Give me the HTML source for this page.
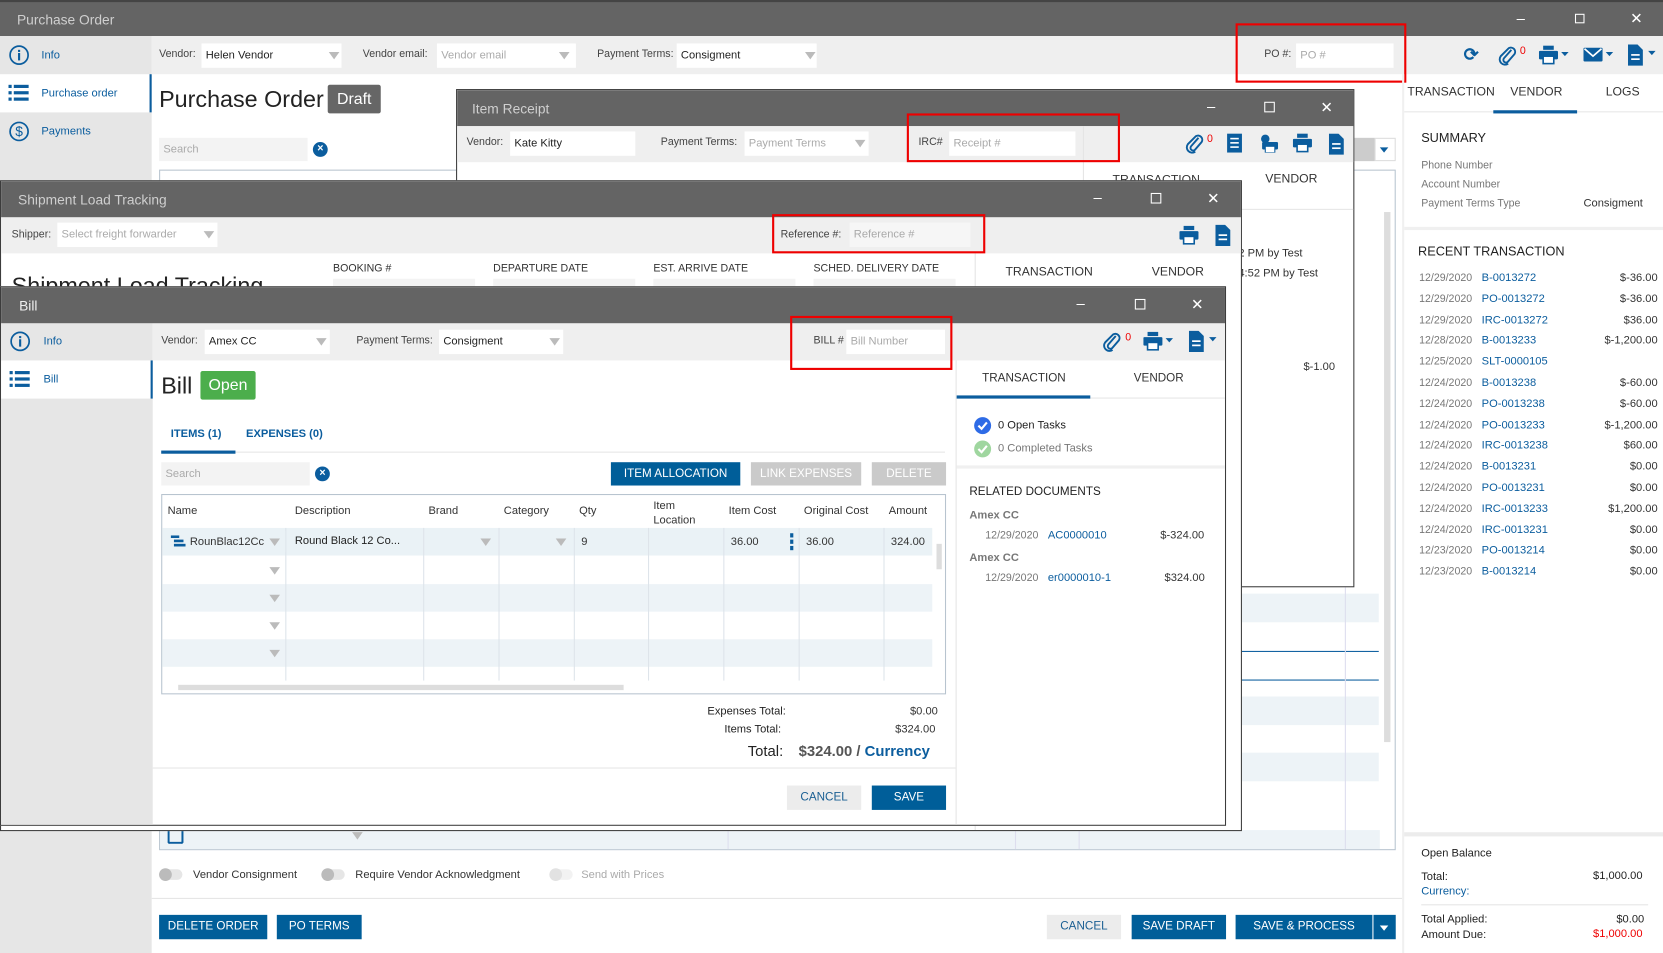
<!DOCTYPE html>
<html><head><meta charset="utf-8">
<style>
*{box-sizing:border-box;margin:0;padding:0}
html,body{width:1663px;height:953px;overflow:hidden;background:#fff}
#w{position:absolute;left:0;top:0;width:1568px;height:899px;transform:scale(1.06059,1.0601);transform-origin:0 0;font-family:"Liberation Sans",sans-serif;font-size:10.5px;color:#333;overflow:hidden}
.a{position:absolute}
.t{position:absolute;white-space:nowrap;line-height:1}
.tb{background:#646464}
.tt{color:#cfcfcf;font-size:13px}
.bar{background:#efefef}
.in{position:absolute;background:#fff;height:23px;padding:5px 4px;white-space:nowrap;font-size:10.5px;color:#222}
.ph{color:#aaa}
.ar{position:absolute;width:0;height:0;border-left:5px solid transparent;border-right:5px solid transparent;border-top:7px solid #bbb}
.red{position:absolute;border:2px solid #e00}
.btn{position:absolute;background:#005e99;color:#fff;font-size:11px;text-align:center;line-height:23px;height:23px}
.gbtn{position:absolute;background:#ececec;color:#1a5f93;font-size:11px;text-align:center;line-height:23px;height:23px}
.lk{color:#0b5d9e}
.g{color:#777}
.ctl{position:absolute;color:#fff;font-size:14px;line-height:1}
.side{background:#e6e6e6}
.xc{position:absolute;width:14px;height:14px;border-radius:50%;background:#0b5d9e;color:#fff;font-size:10px;text-align:center;line-height:14px;font-weight:bold}
.win{position:absolute;border:1px solid #3c3c3c;background:#fff;overflow:hidden}
.lbl{font-size:10px;color:#444}
</style></head><body><div id="w">

<!-- PO window -->
<div class="a tb" style="left:0;top:0;width:1568px;height:34px;border-top:2px solid #444"></div>
<div class="t tt" style="left:16px;top:12px">Purchase Order</div>
<div class="ctl" style="left:1430px;top:10px">–</div>
<div class="a" style="left:1485px;top:13px;width:9px;height:9px;border:1px solid #fff"></div>
<div class="ctl" style="left:1537px;top:10px">✕</div>
<div class="a bar" style="left:143px;top:34px;width:1425px;height:36px"></div>
<div class="a side" style="left:0;top:34px;width:143px;height:865px"></div>
<div class="a" style="left:0;top:70px;width:143px;height:36px;background:#fff;border-right:2px solid #0b5d9e"></div>
<svg class="a" style="left:8px;top:42px" width="20" height="20"><circle cx="10" cy="10" r="8.5" fill="none" stroke="#0b5d9e" stroke-width="1.6"/><rect x="9" y="8" width="2" height="7" fill="#0b5d9e"/><rect x="9" y="5" width="2" height="2" fill="#0b5d9e"/></svg>
<div class="t lk" style="left:39px;top:47px">Info</div>
<svg class="a" style="left:8px;top:79px" width="20" height="18" fill="#0b5d9e"><rect x="0" y="1" width="3" height="3"/><rect x="5" y="1" width="14" height="3"/><rect x="0" y="7" width="3" height="3"/><rect x="5" y="7" width="14" height="3"/><rect x="0" y="13" width="3" height="3"/><rect x="5" y="13" width="14" height="3"/></svg>
<div class="t lk" style="left:39px;top:83px">Purchase order</div>
<svg class="a" style="left:8px;top:114px" width="20" height="20"><circle cx="10" cy="10" r="8.5" fill="none" stroke="#0b5d9e" stroke-width="1.6"/><text x="10" y="14.5" text-anchor="middle" font-size="13" fill="#0b5d9e" font-family="Liberation Sans">$</text></svg>
<div class="t lk" style="left:39px;top:119px">Payments</div>

<div class="t lbl" style="left:150px;top:47px">Vendor:</div>
<div class="in" style="left:190px;top:41px;width:132px">Helen Vendor</div><div class="ar" style="left:310px;top:49px"></div>
<div class="t lbl" style="left:342px;top:47px">Vendor email:</div>
<div class="in ph" style="left:412px;top:41px;width:131px">Vendor email</div><div class="ar" style="left:527px;top:49px"></div>
<div class="t lbl" style="left:563px;top:47px">Payment Terms:</div>
<div class="in" style="left:638px;top:41px;width:132px">Consigment</div><div class="ar" style="left:759px;top:49px"></div>
<div class="t lbl" style="left:1192px;top:47px">PO #:</div>
<div class="in ph" style="left:1222px;top:41px;width:92px">PO #</div>
<div class="red" style="left:1165px;top:22px;width:161px;height:56px"></div>
<div class="t lk" style="left:1380px;top:43px;font-size:17px;font-weight:bold">⟳</div>
<svg class="a" style="left:1412px;top:42px" width="18" height="20"><path d="M13 5 L6 13 a2.5 2.5 0 0 0 3.5 3.5 L16 9 a4 4 0 0 0 -5.5 -5.5 L3 11 a5 5 0 0 0 7 7" fill="none" stroke="#0b5d9e" stroke-width="1.8"/></svg>
<div class="t" style="left:1433px;top:44px;color:#e00;font-size:10px">0</div>
<svg class="a" style="left:1451px;top:43px" width="30" height="18" fill="#0b5d9e"><rect x="4" y="0" width="10" height="4"/><rect x="0" y="5" width="18" height="8" rx="1"/><rect x="4" y="10" width="10" height="7" fill="#fff" stroke="#0b5d9e" stroke-width="1.5"/><path d="M21 6h7l-3.5 4z"/></svg>
<svg class="a" style="left:1493px;top:44px" width="30" height="16" fill="#0b5d9e"><rect x="0" y="1" width="18" height="13" rx="1"/><path d="M1 2 L9 9 L17 2" stroke="#fff" stroke-width="1.6" fill="none"/><path d="M21 5h7l-3.5 4z"/></svg>
<svg class="a" style="left:1535px;top:42px" width="30" height="20" fill="#0b5d9e"><path d="M0 0h9l5 5v15h-14z"/><rect x="3" y="9" width="8" height="1.6" fill="#fff"/><rect x="3" y="13" width="8" height="1.6" fill="#fff"/><path d="M19 6h7l-3.5 4z"/></svg>

<div class="t" style="left:150px;top:83px;font-size:22px;color:#222">Purchase Order</div>
<div class="a" style="left:309px;top:80px;width:50px;height:27px;background:#666;border-radius:2px;color:#fff;font-size:15px;text-align:center;line-height:27px">Draft</div>
<div class="in ph" style="left:150px;top:130px;width:140px;height:22px;background:#f3f3f3">Search</div>
<div class="xc" style="left:295px;top:134px">×</div>

<!-- PO grid background -->
<div class="a" style="left:150px;top:160px;width:1166px;height:642px;border:1px solid #b8c4cf"></div>
<div class="a" style="left:1276px;top:130px;width:20px;height:22px;background:#ccc"></div>
<div class="a" style="left:1296px;top:130px;width:20px;height:22px;background:#fff;border:1px solid #ddd"></div>
<div class="ar" style="left:1301px;top:139px;border-top-color:#0b5d9e;border-width:5px 4px 0 4px"></div>
<div class="a" style="left:1170px;top:560px;width:130px;height:27px;background:#edf3f7"></div>
<div class="a" style="left:1170px;top:657px;width:130px;height:27px;background:#edf3f7"></div>
<div class="a" style="left:1170px;top:710px;width:130px;height:27px;background:#edf3f7"></div>
<div class="a" style="left:151px;top:783px;width:1150px;height:18px;background:#edf3f7"></div>
<div class="a" style="left:1170px;top:614px;width:130px;height:1px;background:#0b5d9e"></div>
<div class="a" style="left:1170px;top:641px;width:130px;height:1px;background:#0b5d9e"></div>
<div class="a" style="left:1268px;top:553px;width:1px;height:248px;background:#dde"></div>
<div class="a" style="left:1305px;top:200px;width:6px;height:500px;background:#ddd"></div>
<div class="a" style="left:158px;top:782px;width:15px;height:14px;border:2px solid #0b5d9e;border-top:none;border-radius:0 0 2px 2px"></div>
<div class="ar" style="left:332px;top:785px"></div>
<div class="a" style="left:686px;top:783px;width:1px;height:18px;background:#dde"></div>
<div class="a" style="left:957px;top:783px;width:1px;height:18px;background:#dde"></div>
<div class="a" style="left:1017px;top:783px;width:1px;height:18px;background:#dde"></div>

<!-- PO footer -->
<div class="a" style="left:150px;top:820px;width:22px;height:10px;border-radius:5px;background:#e6e6e6"></div><div class="a" style="left:150px;top:819px;width:12px;height:12px;border-radius:50%;background:#bbb"></div>
<div class="t" style="left:182px;top:820px;color:#333">Vendor Consignment</div>
<div class="a" style="left:303px;top:820px;width:22px;height:10px;border-radius:5px;background:#e6e6e6"></div><div class="a" style="left:303px;top:819px;width:12px;height:12px;border-radius:50%;background:#bbb"></div>
<div class="t" style="left:335px;top:820px">Require Vendor Acknowledgment</div>
<div class="a" style="left:518px;top:820px;width:22px;height:10px;border-radius:5px;background:#f2f2f2"></div><div class="a" style="left:518px;top:819px;width:12px;height:12px;border-radius:50%;background:#e2e2e2"></div>
<div class="t" style="left:548px;top:820px;color:#aaa">Send with Prices</div>
<div class="a" style="left:143px;top:847px;width:1179px;height:1px;background:#e6e6e6"></div>
<div class="btn" style="left:150px;top:863px;width:102px">DELETE ORDER</div>
<div class="btn" style="left:261px;top:863px;width:80px">PO TERMS</div>
<div class="gbtn" style="left:987px;top:863px;width:70px">CANCEL</div>
<div class="btn" style="left:1067px;top:863px;width:89px">SAVE DRAFT</div>
<div class="btn" style="left:1165px;top:863px;width:129px">SAVE &amp; PROCESS</div>
<div class="btn" style="left:1295px;top:863px;width:21px"></div><div class="ar" style="left:1301px;top:873px;border-top-color:#fff;border-width:5px 4px 0 4px"></div>

<!-- PO right panel -->
<div class="a" style="left:1322px;top:70px;width:2px;height:829px;background:#f0f0f0"></div>
<div class="t" style="left:1327px;top:82px;font-size:11.5px;color:#333">TRANSACTION</div>
<div class="t" style="left:1424px;top:82px;font-size:11.5px;color:#333">VENDOR</div>
<div class="t" style="left:1514px;top:82px;font-size:11.5px;color:#333">LOGS</div>
<div class="a" style="left:1324px;top:105px;width:244px;height:1px;background:#e6e6e6"></div>
<div class="a" style="left:1408px;top:104px;width:79px;height:3px;background:#0b5d9e"></div>
<div class="t" style="left:1340px;top:124px;font-size:12px;color:#222">SUMMARY</div>
<div class="t g" style="left:1340px;top:152px;font-size:10px">Phone Number</div>
<div class="t g" style="left:1340px;top:170px;font-size:10px">Account Number</div>
<div class="t g" style="left:1340px;top:188px;font-size:10px">Payment Terms Type</div>
<div class="t" style="left:1493px;top:187px">Consigment</div>
<div class="a" style="left:1324px;top:214px;width:244px;height:3px;background:#f0f0f0"></div>
<div class="t" style="left:1337px;top:231px;font-size:12px;color:#222">RECENT TRANSACTION</div>
<div class="a" style="left:1338px;top:253px;width:225px;font-size:10.5px;line-height:19.8px">
<div style="position:relative;height:19.8px"><span class="g" style="font-size:10px">12/29/2020</span> <span class="lk" style="position:absolute;left:59px">B-0013272</span><span style="position:absolute;right:0">$-36.00</span></div>
<div style="position:relative;height:19.8px"><span class="g" style="font-size:10px">12/29/2020</span> <span class="lk" style="position:absolute;left:59px">PO-0013272</span><span style="position:absolute;right:0">$-36.00</span></div>
<div style="position:relative;height:19.8px"><span class="g" style="font-size:10px">12/29/2020</span> <span class="lk" style="position:absolute;left:59px">IRC-0013272</span><span style="position:absolute;right:0">$36.00</span></div>
<div style="position:relative;height:19.8px"><span class="g" style="font-size:10px">12/28/2020</span> <span class="lk" style="position:absolute;left:59px">B-0013233</span><span style="position:absolute;right:0">$-1,200.00</span></div>
<div style="position:relative;height:19.8px"><span class="g" style="font-size:10px">12/25/2020</span> <span class="lk" style="position:absolute;left:59px">SLT-0000105</span></div>
<div style="position:relative;height:19.8px"><span class="g" style="font-size:10px">12/24/2020</span> <span class="lk" style="position:absolute;left:59px">B-0013238</span><span style="position:absolute;right:0">$-60.00</span></div>
<div style="position:relative;height:19.8px"><span class="g" style="font-size:10px">12/24/2020</span> <span class="lk" style="position:absolute;left:59px">PO-0013238</span><span style="position:absolute;right:0">$-60.00</span></div>
<div style="position:relative;height:19.8px"><span class="g" style="font-size:10px">12/24/2020</span> <span class="lk" style="position:absolute;left:59px">PO-0013233</span><span style="position:absolute;right:0">$-1,200.00</span></div>
<div style="position:relative;height:19.8px"><span class="g" style="font-size:10px">12/24/2020</span> <span class="lk" style="position:absolute;left:59px">IRC-0013238</span><span style="position:absolute;right:0">$60.00</span></div>
<div style="position:relative;height:19.8px"><span class="g" style="font-size:10px">12/24/2020</span> <span class="lk" style="position:absolute;left:59px">B-0013231</span><span style="position:absolute;right:0">$0.00</span></div>
<div style="position:relative;height:19.8px"><span class="g" style="font-size:10px">12/24/2020</span> <span class="lk" style="position:absolute;left:59px">PO-0013231</span><span style="position:absolute;right:0">$0.00</span></div>
<div style="position:relative;height:19.8px"><span class="g" style="font-size:10px">12/24/2020</span> <span class="lk" style="position:absolute;left:59px">IRC-0013233</span><span style="position:absolute;right:0">$1,200.00</span></div>
<div style="position:relative;height:19.8px"><span class="g" style="font-size:10px">12/24/2020</span> <span class="lk" style="position:absolute;left:59px">IRC-0013231</span><span style="position:absolute;right:0">$0.00</span></div>
<div style="position:relative;height:19.8px"><span class="g" style="font-size:10px">12/23/2020</span> <span class="lk" style="position:absolute;left:59px">PO-0013214</span><span style="position:absolute;right:0">$0.00</span></div>
<div style="position:relative;height:19.8px"><span class="g" style="font-size:10px">12/23/2020</span> <span class="lk" style="position:absolute;left:59px">B-0013214</span><span style="position:absolute;right:0">$0.00</span></div>
</div>
<div class="a" style="left:1324px;top:785px;width:244px;height:4px;background:#ececec"></div>
<div class="t" style="left:1340px;top:800px;color:#222">Open Balance</div>
<div class="t" style="left:1340px;top:822px;color:#222">Total:</div>
<div class="t" style="left:1502px;top:821px;color:#222">$1,000.00</div>
<div class="t lk" style="left:1340px;top:836px">Currency:</div>
<div class="a" style="left:1340px;top:853px;width:214px;height:1px;background:#e6e6e6"></div>
<div class="t" style="left:1340px;top:862px;color:#222">Total Applied:</div>
<div class="t" style="left:1524px;top:862px;color:#222">$0.00</div>
<div class="t" style="left:1340px;top:877px;color:#222">Amount Due:</div>
<div class="t" style="left:1502px;top:876px;color:#e00">$1,000.00</div>

<!-- Item Receipt window -->
<div class="win" style="left:430px;top:84px;width:847px;height:470px">
 <div class="a tb" style="left:0;top:0;width:847px;height:34px"></div>
 <div class="t tt" style="left:14px;top:11px">Item Receipt</div>
 <div class="ctl" style="left:707px;top:8px">–</div>
 <div class="a" style="left:761px;top:11px;width:10px;height:10px;border:1px solid #fff"></div>
 <div class="ctl" style="left:814px;top:9px">✕</div>
 <div class="a bar" style="left:0;top:34px;width:847px;height:34px"></div>
 <div class="a" style="left:590px;top:34px;width:1px;height:420px;background:#e4e4e4"></div>
 <div class="t lbl" style="left:9px;top:45px">Vendor:</div>
 <div class="in" style="left:50px;top:39px;width:118px">Kate Kitty</div>
 <div class="t lbl" style="left:192px;top:45px">Payment Terms:</div>
 <div class="in ph" style="left:271px;top:39px;width:117px">Payment Terms</div><div class="ar" style="left:375px;top:47px"></div>
 <div class="t lbl" style="left:435px;top:45px">IRC#</div>
 <div class="in ph" style="left:464px;top:39px;width:119px">Receipt #</div>
 <svg class="a" style="left:686px;top:40px" width="18" height="20"><path d="M13 5 L6 13 a2.5 2.5 0 0 0 3.5 3.5 L16 9 a4 4 0 0 0 -5.5 -5.5 L3 11 a5 5 0 0 0 7 7" fill="none" stroke="#0b5d9e" stroke-width="1.8"/></svg>
 <div class="t" style="left:707px;top:42px;color:#e00;font-size:10px">0</div>
 <svg class="a" style="left:725px;top:41px" width="16" height="18" fill="#0b5d9e"><rect x="1" y="0" width="14" height="18"/><rect x="4" y="4" width="8" height="1.5" fill="#fff"/><rect x="4" y="8" width="8" height="1.5" fill="#fff"/><rect x="4" y="12" width="8" height="1.5" fill="#fff"/></svg>
 <svg class="a" style="left:756px;top:41px" width="20" height="18" fill="#0b5d9e"><circle cx="6" cy="5" r="4"/><rect x="3" y="8" width="15" height="7" rx="1"/><rect x="6" y="12" width="9" height="6" fill="#fff" stroke="#0b5d9e"/></svg>
 <svg class="a" style="left:788px;top:41px" width="20" height="18" fill="#0b5d9e"><rect x="4" y="0" width="10" height="4"/><rect x="0" y="5" width="18" height="8" rx="1"/><rect x="4" y="10" width="10" height="7" fill="#fff" stroke="#0b5d9e" stroke-width="1.5"/></svg>
 <svg class="a" style="left:822px;top:41px" width="16" height="20" fill="#0b5d9e"><path d="M0 0h9l5 5v15h-14z"/><rect x="3" y="9" width="8" height="1.6" fill="#fff"/><rect x="3" y="13" width="8" height="1.6" fill="#fff"/></svg>
 <div class="t" style="left:618px;top:80px;font-size:11.5px">TRANSACTION</div>
 <div class="t" style="left:762px;top:79px;font-size:11.5px">VENDOR</div>
 <div class="a" style="left:590px;top:112px;width:257px;height:1px;background:#e6e6e6"></div>
 <div class="a" style="left:739px;top:205px;width:108px;height:265px;border-left:1px solid #444"></div>
 <div class="t" style="left:722px;top:149px">3:52 PM by Test</div>
 <div class="t" style="left:722px;top:168px">3 04:52 PM by Test</div>
 <div class="t" style="left:798px;top:256px">$-1.00</div>
</div>

<!-- Shipment window -->
<div class="win" style="left:0;top:170px;width:1171px;height:614px">
 <div class="a tb" style="left:0;top:0;width:1171px;height:34px"></div>
 <div class="t tt" style="left:16px;top:11px">Shipment Load Tracking</div>
 <div class="ctl" style="left:1030px;top:8px">–</div>
 <div class="a" style="left:1084px;top:11px;width:10px;height:10px;border:1px solid #fff"></div>
 <div class="ctl" style="left:1137px;top:9px">✕</div>
 <div class="a bar" style="left:0;top:34px;width:1171px;height:34px"></div>
 <div class="t lbl" style="left:10px;top:46px">Shipper:</div>
 <div class="in ph" style="left:53px;top:39px;width:151px">Select freight forwarder</div><div class="ar" style="left:191px;top:47px"></div>
 <div class="t lbl" style="left:735px;top:46px">Reference #:</div>
 <div class="in ph" style="left:800px;top:39px;width:114px;background:#f6f6f6">Reference #</div>
 <svg class="a" style="left:1111px;top:42px" width="20" height="18" fill="#0b5d9e"><rect x="4" y="0" width="10" height="4"/><rect x="0" y="5" width="18" height="8" rx="1"/><rect x="4" y="10" width="10" height="7" fill="#fff" stroke="#0b5d9e" stroke-width="1.5"/></svg>
 <svg class="a" style="left:1145px;top:41px" width="16" height="20" fill="#0b5d9e"><path d="M0 0h9l5 5v15h-14z"/><rect x="3" y="9" width="8" height="1.6" fill="#fff"/><rect x="3" y="13" width="8" height="1.6" fill="#fff"/></svg>
 <div class="a" style="left:918px;top:68px;width:1px;height:546px;background:#e4e4e4"></div>
 <div class="t" style="left:313px;top:78px;font-size:10px">BOOKING #</div>
 <div class="t" style="left:464px;top:78px;font-size:10px">DEPARTURE DATE</div>
 <div class="t" style="left:615px;top:78px;font-size:10px">EST. ARRIVE DATE</div>
 <div class="t" style="left:766px;top:78px;font-size:10px">SCHED. DELIVERY DATE</div>
 <div class="a" style="left:313px;top:92px;width:134px;height:10px;background:#f3f3f3"></div>
 <div class="a" style="left:464px;top:92px;width:134px;height:10px;background:#f3f3f3"></div>
 <div class="a" style="left:615px;top:92px;width:134px;height:10px;background:#f3f3f3"></div>
 <div class="a" style="left:766px;top:92px;width:134px;height:10px;background:#f3f3f3"></div>
 <div class="t" style="left:10px;top:88px;font-size:22px;color:#222">Shipment Load Tracking</div>
 <div class="t" style="left:947px;top:81px;font-size:11.5px">TRANSACTION</div>
 <div class="t" style="left:1085px;top:81px;font-size:11.5px">VENDOR</div>
</div>

<!-- Bill window -->
<div class="win" style="left:0;top:270px;width:1156px;height:509px">
 <div class="a tb" style="left:0;top:0;width:1156px;height:34px"></div>
 <div class="t" style="left:17px;top:11px;color:#eee;font-size:13px">Bill</div>
 <div class="ctl" style="left:1014px;top:8px">–</div>
 <div class="a" style="left:1069px;top:11px;width:10px;height:10px;border:1px solid #fff"></div>
 <div class="ctl" style="left:1122px;top:9px">✕</div>
 <div class="a side" style="left:0;top:34px;width:143px;height:475px"></div>
 <div class="a" style="left:0;top:69px;width:143px;height:36px;background:#fff;border-right:2px solid #0b5d9e"></div>
 <svg class="a" style="left:8px;top:41px" width="20" height="20"><circle cx="10" cy="10" r="8.5" fill="none" stroke="#0b5d9e" stroke-width="1.6"/><rect x="9" y="8" width="2" height="7" fill="#0b5d9e"/><rect x="9" y="5" width="2" height="2" fill="#0b5d9e"/></svg>
 <div class="t lk" style="left:40px;top:46px">Info</div>
 <svg class="a" style="left:8px;top:78px" width="20" height="18" fill="#0b5d9e"><rect x="0" y="1" width="3" height="3"/><rect x="5" y="1" width="14" height="3"/><rect x="0" y="7" width="3" height="3"/><rect x="5" y="7" width="14" height="3"/><rect x="0" y="13" width="3" height="3"/><rect x="5" y="13" width="14" height="3"/></svg>
 <div class="t lk" style="left:40px;top:82px">Bill</div>
 <div class="a bar" style="left:143px;top:34px;width:1013px;height:35px"></div>
 <div class="t lbl" style="left:151px;top:46px">Vendor:</div>
 <div class="in" style="left:192px;top:40px;width:118px">Amex CC</div><div class="ar" style="left:297px;top:48px"></div>
 <div class="t lbl" style="left:335px;top:46px">Payment Terms:</div>
 <div class="in" style="left:413px;top:40px;width:117px">Consigment</div><div class="ar" style="left:517px;top:48px"></div>
 <div class="t lbl" style="left:766px;top:46px">BILL #</div>
 <div class="in ph" style="left:797px;top:40px;width:93px">Bill Number</div>
 <svg class="a" style="left:1038px;top:41px" width="18" height="20"><path d="M13 5 L6 13 a2.5 2.5 0 0 0 3.5 3.5 L16 9 a4 4 0 0 0 -5.5 -5.5 L3 11 a5 5 0 0 0 7 7" fill="none" stroke="#0b5d9e" stroke-width="1.8"/></svg>
 <div class="t" style="left:1060px;top:43px;color:#e00;font-size:10px">0</div>
 <svg class="a" style="left:1077px;top:42px" width="30" height="18" fill="#0b5d9e"><rect x="4" y="0" width="10" height="4"/><rect x="0" y="5" width="18" height="8" rx="1"/><rect x="4" y="10" width="10" height="7" fill="#fff" stroke="#0b5d9e" stroke-width="1.5"/><path d="M21 6h7l-3.5 4z"/></svg>
 <svg class="a" style="left:1120px;top:41px" width="30" height="20" fill="#0b5d9e"><path d="M0 0h9l5 5v15h-14z"/><rect x="3" y="9" width="8" height="1.6" fill="#fff"/><rect x="3" y="13" width="8" height="1.6" fill="#fff"/><path d="M19 6h7l-3.5 4z"/></svg>

 <div class="t" style="left:151px;top:82px;font-size:22px;color:#222">Bill</div>
 <div class="a" style="left:188px;top:79px;width:52px;height:27px;background:#4cae4c;border-radius:2px;color:#fff;font-size:15px;text-align:center;line-height:27px">Open</div>
 <div class="t lk" style="left:160px;top:133px;font-size:10.5px;font-weight:bold">ITEMS (1)</div>
 <div class="t lk" style="left:231px;top:133px;font-size:10.5px;font-weight:bold">EXPENSES (0)</div>
 <div class="a" style="left:151px;top:155px;width:739px;height:1px;background:#e6e6e6"></div>
 <div class="a" style="left:151px;top:154px;width:70px;height:3px;background:#0b5d9e"></div>
 <div class="in ph" style="left:151px;top:165px;width:140px;height:22px;background:#f3f3f3">Search</div>
 <div class="xc" style="left:296px;top:169px">×</div>
 <div class="btn" style="left:575px;top:165px;width:122px;height:22px;line-height:22px">ITEM ALLOCATION</div>
 <div class="btn" style="left:707px;top:165px;width:104px;height:22px;line-height:22px;background:#cacaca">LINK EXPENSES</div>
 <div class="btn" style="left:821px;top:165px;width:70px;height:22px;line-height:22px;background:#cacaca">DELETE</div>

 <div class="a" style="left:151px;top:195px;width:740px;height:189px;border:1px solid #b8c4cf;overflow:hidden">
  <div class="a" style="left:0;top:31px;width:726px;height:26px;background:#eaf2f6"></div>
  <div class="a" style="left:0;top:84px;width:726px;height:26px;background:#edf3f7"></div>
  <div class="a" style="left:0;top:136px;width:726px;height:26px;background:#edf3f7"></div>
  <div class="a" style="left:116px;top:31px;width:1px;height:144px;background:#dde4ea"></div>
  <div class="a" style="left:246px;top:31px;width:1px;height:144px;background:#dde4ea"></div>
  <div class="a" style="left:317px;top:31px;width:1px;height:144px;background:#dde4ea"></div>
  <div class="a" style="left:388px;top:31px;width:1px;height:144px;background:#dde4ea"></div>
  <div class="a" style="left:458px;top:31px;width:1px;height:144px;background:#dde4ea"></div>
  <div class="a" style="left:529px;top:31px;width:1px;height:144px;background:#dde4ea"></div>
  <div class="a" style="left:600px;top:31px;width:1px;height:144px;background:#dde4ea"></div>
  <div class="a" style="left:680px;top:31px;width:1px;height:144px;background:#dde4ea"></div>
  <div class="t" style="left:5px;top:10px">Name</div>
  <div class="t" style="left:125px;top:10px">Description</div>
  <div class="t" style="left:251px;top:10px">Brand</div>
  <div class="t" style="left:322px;top:10px">Category</div>
  <div class="t" style="left:393px;top:10px">Qty</div>
  <div class="t" style="left:463px;top:3px;line-height:14px;white-space:normal;width:60px">Item<br>Location</div>
  <div class="t" style="left:534px;top:10px">Item Cost</div>
  <div class="t" style="left:605px;top:10px">Original Cost</div>
  <div class="t" style="left:685px;top:10px">Amount</div>
  <svg class="a" style="left:8px;top:38px" width="14" height="12" fill="#0b5d9e"><rect x="0" y="0" width="8" height="2.5"/><rect x="3" y="4" width="9" height="2.5"/><rect x="3" y="8" width="11" height="2.5"/></svg>
  <div class="t" style="left:26px;top:39px">RounBlac12Cc</div>
  <div class="a" style="left:100px;top:34px;width:16px;height:20px;background:#eaf2f6"></div>
  <div class="ar" style="left:101px;top:41px"></div>
  <div class="t" style="left:125px;top:38px;color:#222">Round Black 12 Co...</div>
  <div class="ar" style="left:300px;top:41px"></div>
  <div class="ar" style="left:371px;top:41px"></div>
  <div class="t" style="left:395px;top:39px">9</div>
  <div class="t" style="left:536px;top:39px">36.00</div>
  <div class="a" style="left:592px;top:36px;width:3px;height:4px;background:#0b5d9e"></div>
  <div class="a" style="left:592px;top:42px;width:3px;height:4px;background:#0b5d9e"></div>
  <div class="a" style="left:592px;top:48px;width:3px;height:4px;background:#0b5d9e"></div>
  <div class="t" style="left:607px;top:39px">36.00</div>
  <div class="t" style="left:687px;top:39px">324.00</div>
  <div class="ar" style="left:101px;top:68px"></div>
  <div class="ar" style="left:101px;top:94px"></div>
  <div class="ar" style="left:101px;top:120px"></div>
  <div class="ar" style="left:101px;top:146px"></div>
  <div class="a" style="left:730px;top:46px;width:5px;height:24px;background:#ddd"></div>
  <div class="a" style="left:15px;top:179px;width:420px;height:5px;background:#ddd"></div>
 </div>
 <div class="t" style="left:666px;top:395px;color:#222">Expenses Total:</div>
 <div class="t" style="left:857px;top:395px">$0.00</div>
 <div class="t" style="left:682px;top:412px;color:#222">Items Total:</div>
 <div class="t" style="left:843px;top:412px">$324.00</div>
 <div class="t" style="left:704px;top:430px;font-size:14px;color:#222">Total:</div>
 <div class="t" style="left:752px;top:430px;font-size:14px;font-weight:bold;color:#555">$324.00 / <span class="lk">Currency</span></div>
 <div class="a" style="left:143px;top:453px;width:757px;height:1px;background:#e6e6e6"></div>
 <div class="gbtn" style="left:741px;top:470px;width:70px">CANCEL</div>
 <div class="btn" style="left:821px;top:470px;width:70px">SAVE</div>

 <div class="a" style="left:900px;top:69px;width:1px;height:440px;background:#e4e4e4"></div>
 <div class="t" style="left:925px;top:81px;font-size:11px">TRANSACTION</div>
 <div class="t" style="left:1068px;top:81px;font-size:11px">VENDOR</div>
 <div class="a" style="left:901px;top:104px;width:255px;height:1px;background:#e6e6e6"></div>
 <div class="a" style="left:901px;top:102px;width:126px;height:3px;background:#0b5d9e"></div>
 <svg class="a" style="left:917px;top:122px" width="17" height="17"><circle cx="8.5" cy="8.5" r="8" fill="#2e6be6"/><path d="M4.5 8.5l3 3 5-6" stroke="#fff" stroke-width="2" fill="none"/></svg>
 <div class="t" style="left:940px;top:125px;color:#222">0 Open Tasks</div>
 <svg class="a" style="left:917px;top:144px" width="17" height="17"><circle cx="8.5" cy="8.5" r="8" fill="#9fd69f"/><path d="M4.5 8.5l3 3 5-6" stroke="#fff" stroke-width="2" fill="none"/></svg>
 <div class="t g" style="left:940px;top:147px">0 Completed Tasks</div>
 <div class="a" style="left:901px;top:168px;width:255px;height:3px;background:#f0f0f0"></div>
 <div class="t" style="left:913px;top:188px;font-size:11px;color:#222">RELATED DOCUMENTS</div>
 <div class="t g" style="left:913px;top:210px;font-weight:bold">Amex CC</div>
 <div class="t g" style="left:928px;top:230px;font-size:10px">12/29/2020</div>
 <div class="t lk" style="left:987px;top:229px">AC0000010</div>
 <div class="t" style="left:1093px;top:229px">$-324.00</div>
 <div class="t g" style="left:913px;top:250px;font-weight:bold">Amex CC</div>
 <div class="t g" style="left:928px;top:270px;font-size:10px">12/29/2020</div>
 <div class="t lk" style="left:987px;top:269px">er0000010-1</div>
 <div class="t" style="left:1097px;top:269px">$324.00</div>
</div>

<!-- red boxes on top -->
<div class="red" style="left:855px;top:107px;width:201px;height:46px"></div>
<div class="red" style="left:728px;top:202px;width:201px;height:37px"></div>
<div class="red" style="left:745px;top:298px;width:153px;height:51px"></div>

</div></body></html>
